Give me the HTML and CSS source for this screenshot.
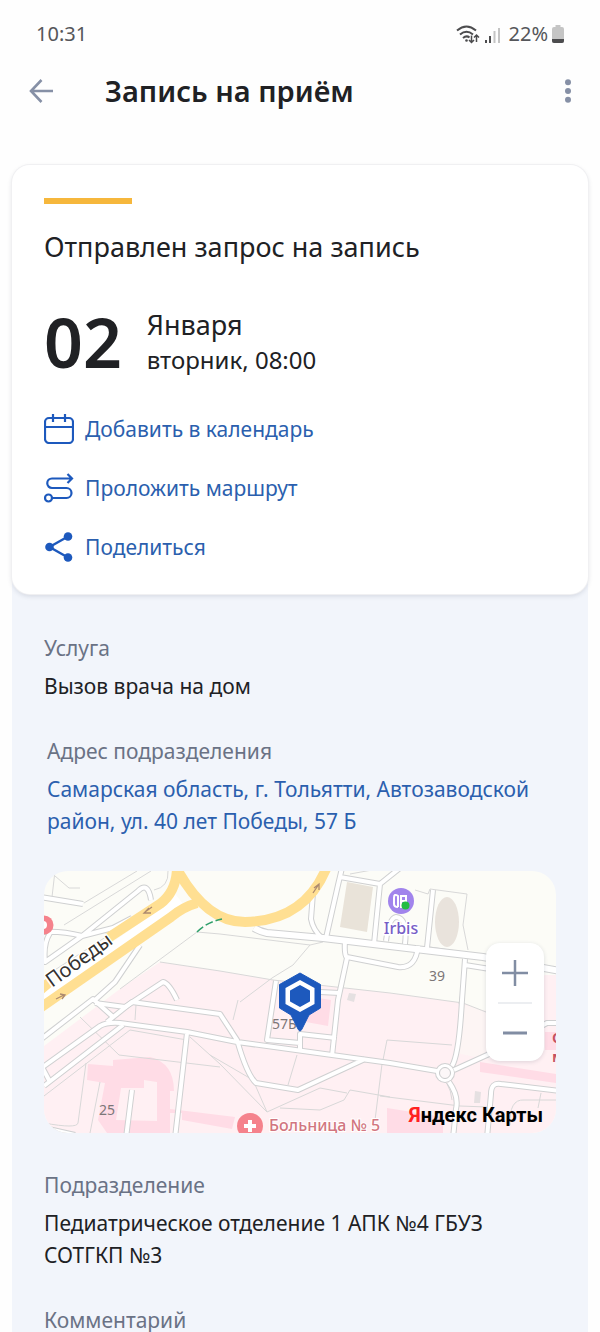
FILE: index.html
```html
<!DOCTYPE html>
<html lang="ru">
<head>
<meta charset="utf-8">
<meta name="viewport" content="width=device-width, initial-scale=1">
<title>Запись на приём</title>
<link rel="stylesheet" href="styles.css">
</head>
<body class="app">
<div class="status">
  <span class="status-time">10:31</span>
  <div class="status-right">
    <svg class="status-net" viewBox="0 0 46 20" fill="none" aria-hidden="true">
      <g stroke="#4c4c4e" stroke-width="2"><path d="M1 6.500Q10.500-1.500 20 6.500M4 10.500q6.500-5.500 13 0M7 14q3.500-3 6.500-.500"/></g>
      <circle cx="10.500" cy="16.500" r="1.300" fill="#4c4c4e"/>
      <path d="M15.500 11.500v7M13 16l2.500 2.500L18 16M20.500 18v-7M18 13.500l2.500-2.500 2.500 2.500" stroke="#4c4c4e" stroke-width="1.500"/>
      <path d="M30 19v-3M34 19v-7" stroke="#4c4c4e" stroke-width="2"/><path d="M38.500 19V7M43 19V4" stroke="#c4c4c4" stroke-width="2"/>
    </svg>
    <span>22%</span>
    <svg class="status-battery" viewBox="0 0 12 18" aria-hidden="true"><path d="M3.500 0h5v2H10q2 0 2 2v12q0 2-2 2H2q-2 0-2-2V4q0-2 2-2h1.500z" fill="#c5c5c5"/><path d="M0 14h12v2q0 2-2 2H2q-2 0-2-2z" fill="#4c4c4e"/></svg>
  </div>
</div>
<header class="bar">
  <button class="icon-button" aria-label="Назад"><svg class="icon-back" viewBox="0 0 24 24" fill="none" stroke="#8690a6" stroke-width="2.600"><path d="M24 12H2M12.500 1L2 12l10.500 11"/></svg></button>
  <h1 class="title">Запись на приём</h1>
  <button class="icon-button" aria-label="Меню"><svg class="icon-more" viewBox="0 0 6 24" fill="#8690a6"><circle cx="3" cy="3.200" r="3"/><circle cx="3" cy="12" r="3"/><circle cx="3" cy="20.800" r="3"/></svg></button>
</header>
<main class="scroll">
  <div class="panel">
    <section class="card">
      <div class="accent"></div>
      <h2 class="state">Отправлен запрос на запись</h2>
      <div class="date">
        <span class="day">02</span>
        <div class="when"><div>Января</div><div class="time">вторник, 08:00</div></div>
      </div>
      <div class="actions">
        <button class="action"><svg class="action-icon" viewBox="0 0 30 30" fill="none" stroke="#1d59bd" stroke-width="2.200"><rect x="1" y="4" width="28" height="25" rx="4"/><path d="M1 13h28M9 0v8M21 0v8"/></svg>Добавить в календарь</button>
        <button class="action"><svg class="action-icon" viewBox="0 0 30 30" fill="none" stroke="#1d59bd" stroke-width="2.200"><circle cx="4.500" cy="25" r="3.500"/><path d="M8 25h14.500a5 5 0 0 0 0-10H8A4.750 4.750 0 0 1 8 5.500h20M23.500 1L28 5.500 23.500 10"/></svg>Проложить маршрут</button>
        <button class="action"><svg class="action-icon" viewBox="0 0 30 30" fill="#1d59bd"><path d="M24 4.500L5.500 15 24 25.500" fill="none" stroke="#1d59bd" stroke-width="2.400"/><circle cx="24" cy="4.500" r="4.300"/><circle cx="5.500" cy="15" r="4.300"/><circle cx="24" cy="25.500" r="4.300"/></svg>Поделиться</button>
      </div>
    </section>
    <div class="details">
      <section class="field"><h3 class="label">Услуга</h3><p class="value">Вызов врача на дом</p></section>
      <section class="field field-address"><h3 class="label">Адрес подразделения</h3><a class="value link" href="#map">Самарская область, г. Тольятти, Автозаводской район, ул. 40 лет Победы, 57 Б</a></section>
      <div class="map" id="map">
        <svg class="map-canvas" viewBox="44 871 512 262" preserveAspectRatio="xMidYMid slice" role="img" aria-label="Карта">
          <defs>
            <g id="roads" fill="none" stroke-linejoin="round">
              <path d="M40 897L83 904M82 936L138 891Q148 881 151 900M44 932Q62 931 82 936L113 928 132 918M50 933Q43 944 45 962L82 936"/>
              <path d="M140 945L115 982 95 1000M95 1003L125 1007 163 982Q169 983 177 1000"/>
              <path d="M313 893L311 919Q313 930 322 938M342 868L338 885 326 938M340 877L380 884 400 868M380 884L374 944M345 942Q344 954 347 958L338 1000 332 1056M347 957L398 967Q416 969 418 946M433 890L427 948M386 941Q389 918 396 917 408 918 405 944"/>
              <path d="M465 959L462 1000Q459 1055 452 1066M465 965L490 969M320 992L340 993M276 981L267 1040 300 1043V1051M300 1044V1034L336 1038"/>
              <path d="M40 1069L100 1026Q107 1022 120 1023L187 1032 237 1042 332 1055 390 1063 437 1071M44 1086L123 1025M40 1040L93 999 112 1016M107 1022L132 1002 220 1014 237 1040Q247 1075 256 1083L298 1090 365 1059M187 1033L175 1138M42 1067L50 1082M132 1090L126 1138"/>
              <path d="M454 1070L487 1055 547 1023H560M449 1082Q459 1096 456 1109L453 1138M487 1138L491 1094Q491 1082 501 1084L560 1091M44 1128L75 1135"/>
            </g>
            <path id="avenue" d="M254 928Q261 932 267 933L323 938 390 946 483 957 560 971" fill="none"/>
          </defs>
          <rect x="44" y="871" width="512" height="262" fill="#fcfcf7"/>
          <path d="M160 962L220 971 273 980 390 993 463 1003 483 1012 545 975H556V1133H44V1046L120 989Z" fill="#fff0f3"/>
          <path d="M463 1005L490 1012V1060L456 1053Z" fill="#fdf5f4"/>
          <g fill="#ffdce6">
            <path fill-rule="evenodd" d="M88 1064L113 1066V1060L150 1057Q174 1063 174 1091H170V1109L235 1117 232 1129 182 1120V1113H170V1133H107L98 1120 105 1083 87 1080ZM121 1088L144 1088V1080L157 1082V1121L116 1120Z"/>
            <path d="M480 1062L556 1074V1083L480 1072ZM387 1108L443 1117V1133H387ZM545 1032H556V1050H545ZM312 997L331 1000 328 1026 306 1022Z"/>
          </g>
          <path d="M347 882L373 887 367 932 340 927Z" fill="#e9e3d9"/>
          <ellipse cx="447" cy="922" rx="12" ry="25" fill="#e9e3dc"/>
          <path d="M349 993L356 994 354 1002 347 1000ZM475 1091L481 1092 480 1103 474 1103Z" fill="#e5e0e1"/>
          <g fill="none" stroke="#d8d8d8">
            <path d="M52 897L55 871M55 876L69 888H80M84 903L137 871M64 925L151 871M168 871Q169 887 154 890M44 977L115 931M197 932L120 989M197 932L220 934 310 945 323 942M310 945L293 965 272 978 240 1002M160 962L220 971 273 980 390 993 463 1003 486 1012M415 890L428 894 430 889 467 894 463 925 468 950M430 947L490 956M150 918L115 960M350 874L372 870M465 970L459 1004"/>
            <path d="M44 1096L130 1030 187 1040M80 1017L119 1055 220 1067M136 1005L135 1020M86 1063L78 1123Q77 1129 44 1123M190 1037L220 1064 267 1112 320 1088 347 1093M280 1108L320 1110 344 1100 350 1090 390 1097M297 1055L288 1085M383 1060L387 1040 452 1045M382 1064L375 1120M100 1082L90 1133M210 1055L253 1080 267 1112M238 1000L233 1020M380 1096L460 1106 487 1107M510 1125Q509 1099 524 1100H556M541 1093L538 1108M437 1077Q450 1080 452 1100"/>
          </g>
          <use href="#roads" stroke="#cfd0d1" stroke-width="6"/>
          <use href="#avenue" stroke="#cfd0d1" stroke-width="8"/>
          <circle cx="445" cy="1073" r="10" fill="#cfd0d1"/>
          <use href="#roads" stroke="#fff" stroke-width="4"/>
          <use href="#avenue" stroke="#fff" stroke-width="6"/>
          <circle cx="445" cy="1073" r="9" fill="#fff"/><circle cx="445" cy="1073" r="5.500" fill="#fcf7f8" stroke="#c9cacb"/>
          <path d="M40 1004L100 960 145 928 180 900" fill="none" stroke="#fff" stroke-width="14"/>
          <g fill="none" stroke="#ffdf92" stroke-width="10">
            <path d="M177 869Q176 892 160 904L108 938M52 980L40 990"/>
            <path d="M197 903Q183 907 171 917L40 1008"/>
            <path d="M177 869Q206 922 245 922 304 921 326 869"/>
          </g>
          <path d="M197 932Q207 922 222 919" fill="none" stroke="#2fa06b" stroke-width="1.500" stroke-dasharray="8 3"/>
          <path d="M152 907L145 912M149 908L144 913 151 913M56 999L64 995M60 994L65 995 62 999M313 893L319 884M314 888L319 884V890" fill="none" stroke="#ad8a6f" stroke-width="1.300"/>
          <circle cx="44" cy="925" r="9.500" fill="#f5828c"/><circle cx="43" cy="925" r="4" fill="#fff"/>
          <text class="map-street" transform="translate(52 988) rotate(-36)">Победы</text>
          <text class="map-number" x="429" y="981">39</text>
          <text class="map-number" x="99" y="1115">25</text>
          <text class="map-number" x="272" y="1029">57Б</text>
          <circle cx="401" cy="901" r="13" fill="#a184ec"/>
          <path d="M398 907V896Q394 893 394 898V904Q394 907 398 907M401 908V896H406V901H401" fill="none" stroke="#fff" stroke-width="2"/><circle cx="405.500" cy="905.500" r="4" fill="#22bd43"/>
          <text class="map-poi" x="401" y="934">Irbis</text>
          <circle cx="250" cy="1126" r="13" fill="#f5828c"/><path d="M250 1120V1132M244 1126H256" stroke="#fff" stroke-width="4"/>
          <text class="map-hospital" x="269" y="1131">Больница № 5</text>
          <text class="map-edge" x="552" y="1043">С</text><text class="map-edge" x="552" y="1062">м</text>
          <path d="M300 973L320.500 984.500V1008L309 1015 302 1029Q300 1033 298 1029L291 1015 279.500 1008V984.500Z" fill="#1d59bd" stroke="#1d59bd" stroke-linejoin="round"/>
          <path d="M300 980L314.500 988V1004L300 1012 285.500 1004V988Z" fill="#fff"/>
          <path d="M300 986L309 991V1001L300 1006 291 1001V991Z" fill="#1d59bd" stroke="#1d59bd" stroke-width="2" stroke-linejoin="round"/>
        </svg>
        <div class="zoom">
          <button class="zoom-button" aria-label="Приблизить"><svg class="zoom-icon" viewBox="0 0 26 26" stroke="#818da3" stroke-width="2.500"><path d="M0 13h26M13 0v26"/></svg></button>
          <button class="zoom-button" aria-label="Отдалить"><svg class="zoom-icon" viewBox="0 0 26 26" stroke="#818da3" stroke-width="3"><path d="M1 13h24"/></svg></button>
        </div>
        <div class="brand"><span class="brand-red">Я</span>ндекс Карты</div>
      </div>
      <section class="field"><h3 class="label">Подразделение</h3><p class="value">Педиатрическое отделение 1 АПК №4 ГБУЗ СОТГКП №3</p></section>
      <section class="field"><h3 class="label">Комментарий</h3></section>
    </div>
  </div>
</main>
</body>
</html>
```

FILE: styles.css
```css
* { box-sizing: border-box; }
.app { margin: 0; height: 100vh; display: flex; flex-direction: column; overflow: hidden; background: #fefefe; color: #202124; font-family: "Noto Sans", "Open Sans", sans-serif; font-size: 21px; line-height: 32px; }
h1, h2, h3, p { margin: 0; font-weight: 400; font-size: inherit; }
button { border: 0; padding: 0; background: none; font: inherit; color: inherit; cursor: pointer; }
svg { display: block; }
.status { display: flex; justify-content: space-between; align-items: center; height: 67px; padding: 0 36px; font-size: 20px; color: #55565a; flex: none; }
.status-right { display: flex; align-items: center; gap: 4px; }
.status-net { width: 46px; height: 20px; margin-right: 3px; }
.status-battery { width: 12px; height: 18px; }
.bar { display: flex; align-items: center; flex: none; height: 48px; padding: 0 29px; }
.icon-button { display: flex; align-items: center; height: 48px; }
.icon-back { width: 24px; height: 24px; }
.icon-more { width: 6px; height: 24px; }
.title { flex: 1; padding-left: 52px; font-size: 29px; line-height: 40px; font-weight: 600; }
.scroll { flex: 1; min-height: 0; overflow-y: auto; scrollbar-width: none; padding: 50px 12px 0; }
.panel { background: #f2f5fb; border-radius: 20px 20px 0 0; }
.card { background: #fff; border-radius: 18px; box-shadow: 0 0 0 1px #f0f0f2, 0 2px 5px rgba(30, 40, 70, .15); padding: 33px 32px 31px; }
.accent { width: 88px; height: 6px; background: #f6b73c; }
.state { margin-top: 25px; font-size: 27px; line-height: 36px; }
.date { display: flex; align-items: center; gap: 25px; margin-top: 42px; }
.day { font-size: 68px; line-height: 68px; font-weight: 600; }
.when { font-size: 27px; line-height: 35px; }
.time { font-size: 24px; }
.actions { display: flex; flex-direction: column; align-items: flex-start; gap: 27px; margin-top: 36px; }
.action { display: flex; align-items: center; gap: 11px; color: #2b5fae; }
.action-icon { width: 30px; height: 30px; flex: none; }
.details { display: flex; flex-direction: column; gap: 33px; padding: 38px 32px 24px; }
.field { display: flex; flex-direction: column; gap: 6px; }
.field-address { padding-left: 3px; }
.label { color: #6a7285; }
.link { color: #2b5fae; text-decoration: none; }
.map { position: relative; margin: 1px 0 3px; border-radius: 24px; overflow: hidden; aspect-ratio: 512 / 262; }
.map-canvas { width: 100%; height: 100%; }
.map-street { font-size: 20px; fill: #34312f; stroke: #fff; stroke-width: 3px; paint-order: stroke; }
.map-number { font-size: 14px; fill: #7c7678; }
.map-poi { font-size: 16px; font-weight: 500; fill: #775ec7; stroke: #fff; stroke-width: 3px; paint-order: stroke; text-anchor: middle; }
.map-hospital { font-size: 16px; font-weight: 500; fill: #d27680; stroke: #fff; stroke-width: 2px; paint-order: stroke; }
.map-edge { font-size: 15px; font-weight: 600; fill: #c4505e; }
.zoom { position: absolute; top: 72px; right: 12px; width: 58px; display: flex; flex-direction: column; background: #fff; border-radius: 14px; box-shadow: 0 1px 4px rgba(30, 40, 70, .15); padding: 0 12px; }
.zoom-button { height: 59px; display: flex; align-items: center; justify-content: center; }
.zoom-button + .zoom-button { border-top: 2px solid #eceef1; }
.zoom-icon { width: 26px; height: 26px; }
.brand { position: absolute; right: 13px; bottom: 4px; font-family: Roboto, sans-serif; font-size: 20px; line-height: 28px; font-weight: 700; color: #000; }
.brand-red { color: #f22; }
```
